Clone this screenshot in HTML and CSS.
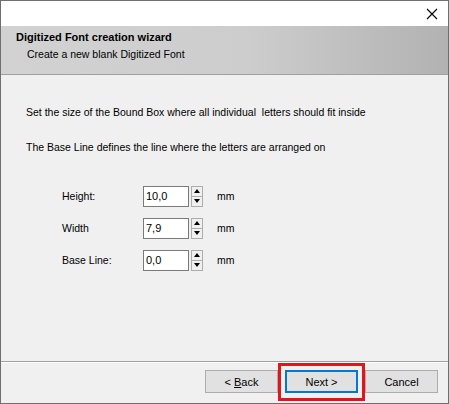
FILE: index.html
```html
<!DOCTYPE html>
<html>
<head>
<meta charset="utf-8">
<link rel="stylesheet" href="styles.css">
</head>
<body>
<div class="window">
  <div class="titlebar">
    <svg class="close" width="12" height="12" viewBox="0 0 12 12"><path d="M1 1 L11 11 M11 1 L1 11" stroke="#000" stroke-width="1.1" fill="none"/></svg>
  </div>
  <div class="header">
    <div class="h-title">Digitized Font creation wizard</div>
    <div class="h-sub">Create a new blank Digitized Font</div>
  </div>
  <div class="content">
    <p class="line first">Set the size of the Bound Box where all individual&nbsp; letters should fit inside</p>
    <p class="line second">The Base Line defines the line where the letters are arranged on</p>
    <div class="fields">
      <div class="row">
        <span class="label">Height:</span>
        <span class="input">10,0</span>
        <span class="spin"><span class="up"></span><span class="down"></span></span>
        <span class="unit">mm</span>
      </div>
      <div class="row">
        <span class="label">Width</span>
        <span class="input">7,9</span>
        <span class="spin"><span class="up"></span><span class="down"></span></span>
        <span class="unit">mm</span>
      </div>
      <div class="row">
        <span class="label">Base Line:</span>
        <span class="input">0,0</span>
        <span class="spin"><span class="up"></span><span class="down"></span></span>
        <span class="unit">mm</span>
      </div>
    </div>
  </div>
  <div class="footer">
    <button class="btn">&lt; <u>B</u>ack</button>
    <button class="btn default">Next &gt;<span class="mark"></span></button>
    <button class="btn">Cancel</button>
  </div>
</div>
</body>
</html>
```
FILE: styles.css
```css
* { box-sizing: border-box; }
html, body { margin: 0; padding: 0; }
body {
  font-family: "Liberation Sans", Arial, sans-serif;
  font-size: 10.5px;
  line-height: 13px;
  color: #000;
  background: #fff;
}
.window {
  width: 449px;
  height: 404px;
  border: 1px solid #6f6f6f;
  display: flex;
  flex-direction: column;
  background: #f0f0f0;
}
.titlebar {
  height: 25px;
  background: #fff;
  display: flex;
  justify-content: flex-end;
  align-items: center;
  padding-right: 10px;
}
.close { display: block; margin-top: 1px; }
.header {
  height: 49px;
  background: linear-gradient(to right, #d2d2d2 0%, #cdcdcd 55%, #b2b2b2 100%);
  border-bottom: 1px solid #a0a0a0;
  padding-top: 5px;
  padding-left: 15px;
}
.h-title { font-weight: bold; font-size: 11px; }
.h-sub { padding-left: 11px; margin-top: 4px; }
.content {
  flex: 1;
  padding-left: 25px;
}
.line { margin: 0; }
.line.first { margin-top: 31px; }
.line.second { margin-top: 22px; }
.fields {
  margin-top: 32px;
  padding-left: 36px;
  display: flex;
  flex-direction: column;
  gap: 12px;
}
.row {
  display: flex;
  align-items: center;
  height: 20px;
}
.label { width: 81px; }
.input {
  width: 46px;
  height: 21px;
  background: #fff;
  border: 1px solid #7a7a7a;
  padding-left: 2px;
  line-height: 19px;
  font-size: 11px;
}
.spin {
  margin-left: 2px;
  width: 12px;
  height: 21px;
  display: flex;
  flex-direction: column;
}
.spin .up, .spin .down {
  flex: 1;
  border: 1px solid #adadad;
  background: #f0f0f0;
  display: flex;
  align-items: center;
  justify-content: center;
}
.spin .down { border-top: none; }
.spin .up::after {
  content: "";
  border-left: 3px solid transparent;
  border-right: 3px solid transparent;
  border-bottom: 4px solid #000;
}
.spin .down::after {
  content: "";
  border-left: 3px solid transparent;
  border-right: 3px solid transparent;
  border-top: 4px solid #000;
}
.unit { margin-left: 14px; }
.footer {
  height: 42px;
  border-top: 1px solid #a0a0a0;
  box-shadow: inset 0 1px 0 #fff;
  display: flex;
  justify-content: flex-end;
  align-items: flex-start;
  padding-top: 8px;
  padding-right: 10px;
  gap: 7px;
}
.btn {
  position: relative;
  width: 73px;
  height: 23px;
  background: #e1e1e1;
  border: 1px solid #adadad;
  font-family: inherit;
  font-size: 11px;
  color: #000;
  padding: 0;
  margin: 0;
}
.btn.default { border: 2px solid #0078d7; }
.mark {
  position: absolute;
  left: -9px;
  top: -9px;
  right: -9px;
  bottom: -10px;
  border: 3px solid #e3141c;
}
```
